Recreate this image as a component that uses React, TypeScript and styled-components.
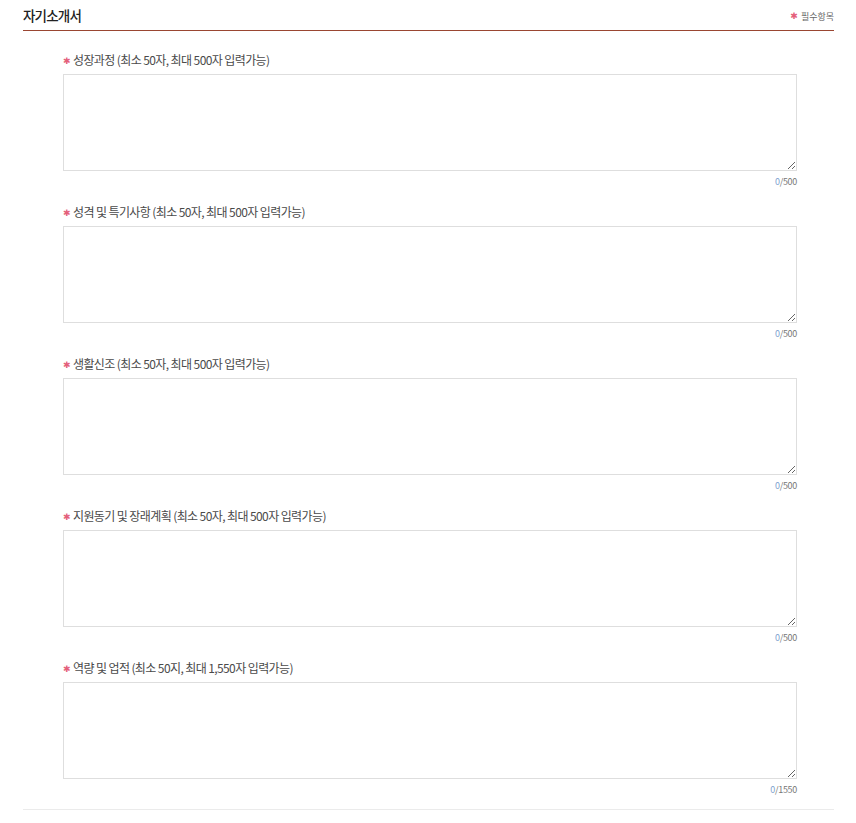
import * as React from "react";
import styled, { createGlobalStyle } from "styled-components";

const GlobalStyle = createGlobalStyle`
  body {
    margin: 0;
    background: #fff;
    font-family: "Noto Sans CJK KR", "Noto Sans", sans-serif;
  }
`;

interface IField {
  title: string;
  max: number;
  maxLabel: string;
}

const fields: IField[] = [
  { title: "성장과정 (최소 50자, 최대 500자 입력가능)", max: 500, maxLabel: "500" },
  { title: "성격 및 특기사항 (최소 50자, 최대 500자 입력가능)", max: 500, maxLabel: "500" },
  { title: "생활신조 (최소 50자, 최대 500자 입력가능)", max: 500, maxLabel: "500" },
  { title: "지원동기 및 장래계획 (최소 50자, 최대 500자 입력가능)", max: 500, maxLabel: "500" },
  { title: "역량 및 업적 (최소 50지, 최대 1,550자 입력가능)", max: 1550, maxLabel: "1550" },
];

const Field: React.FunctionComponent<{ field: IField }> = ({ field }) => {
  const [text, setText] = React.useState("");
  return (
    <Item>
      <Label>
        <Star>✱</Star>
        {field.title}
      </Label>
      <Area
        value={text}
        maxLength={field.max}
        onChange={(e) => setText(e.target.value)}
      />
      <Counter>
        <Count>{text.length}</Count>/{field.maxLabel}
      </Counter>
    </Item>
  );
};

export default function App() {
  return (
    <Container>
      <GlobalStyle />
      <Header>
        <Title>자기소개서</Title>
        <Required>
          <Star>✱</Star>필수항목
        </Required>
      </Header>
      <List>
        {fields.map((f) => (
          <Field key={f.title} field={f} />
        ))}
      </List>
    </Container>
  );
}

const Container = styled.div`
  padding: 0 22px 0 23px;
`;

const Header = styled.div`
  display: flex;
  justify-content: space-between;
  align-items: flex-end;
  height: 31px;
  border-bottom: 1px solid #9a4632;
  box-sizing: border-box;
  padding-bottom: 5px;
`;

const Title = styled.h2`
  margin: 0;
  font-size: 13.5px;
  font-weight: 500;
  letter-spacing: -0.8px;
  color: #222;
  line-height: 20px;
`;

const Required = styled.span`
  font-size: 9px;
  color: #666;
  line-height: 13px;
  margin-bottom: 2px;
`;

const Star = styled.span`
  font-family: "DejaVu Sans", sans-serif;
  color: #e4607a;
  margin-right: 3px;
  font-size: 9px;
  line-height: 0;
  vertical-align: 1px;
`;

const List = styled.div`
  padding: 21px 37px 13px 40px;
  border-bottom: 1px solid #ebebeb;
`;

const Item = styled.div`
  margin-bottom: 16px;

  &:last-child {
    margin-bottom: 0;
  }
`;

const Label = styled.div`
  height: 16px;
  font-size: 12px;
  letter-spacing: -0.6px;
  line-height: 16px;
  color: #4a4a4a;
  margin-bottom: 6px;
`;

const Area = styled.textarea`
  display: block;
  width: 100%;
  height: 97px;
  box-sizing: border-box;
  border: 1px solid #dedede;
  resize: vertical;
  padding: 6px 8px;
  font-family: inherit;
  font-size: 12px;
  outline: none;
`;

const Counter = styled.div`
  height: 13px;
  margin-top: 4px;
  text-align: right;
  font-size: 9px;
  letter-spacing: -0.3px;
  line-height: 13px;
  color: #777;
`;

const Count = styled.span`
  color: #7ea3cf;
`;
